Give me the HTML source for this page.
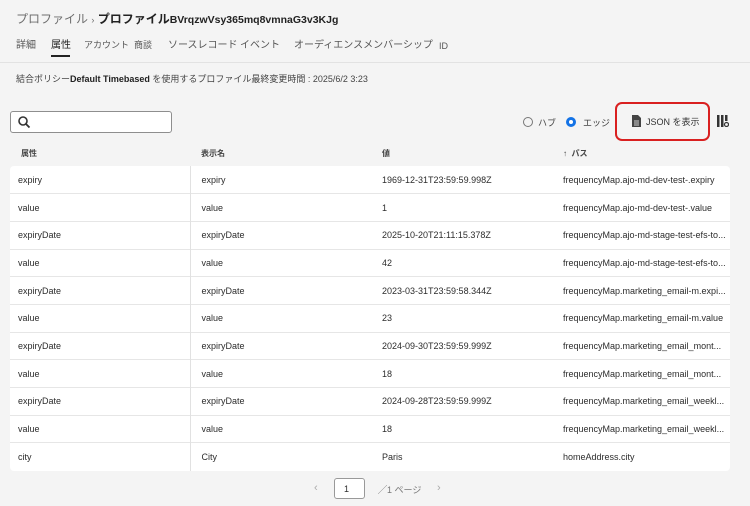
<!DOCTYPE html>
<html><head><meta charset="utf-8"><style>
*{margin:0;padding:0;box-sizing:border-box}
body{width:750px;height:506px;background:#f4f4f4;font-family:"Liberation Sans","Noto Sans CJK JP",sans-serif;color:#2c2c2c;position:relative;overflow:hidden;font-size:9px}
.a{position:absolute;white-space:nowrap}
.tab{position:absolute;top:39px;font-size:10px;line-height:13px;color:#555}
table{position:absolute;left:10px;top:166px;width:720px;border-collapse:collapse;background:#fff;border-radius:4px;font-size:9px}
td{height:27.7px;border-top:1px solid #e6e6e6;padding:0 0 0 8px;color:#2c2c2c}
tr:first-child td{border-top:none}
td:first-child{border-right:1px solid #e1e1e1;width:180px}
td:nth-child(2){width:180px;padding-left:11px}
td:nth-child(3){width:185px;padding-left:12px}
td:nth-child(4){padding-left:8px}
</style></head><body>
<div class="a" style="left:16px;top:10px;font-size:12px;color:#6e6e6e">プロファイル <span style="font-size:9px">›</span> <b style="color:#222">プロファイル</b><b style="color:#222;font-size:10.5px">BVrqzwVsy365mq8vmnaG3v3KJg</b></div>
<div class="tab" style="left:16px">詳細</div>
<div class="tab" style="left:51px;color:#222">属性</div>
<div class="a" style="left:51px;top:55px;width:19px;height:2px;background:#222"></div>
<div class="tab" style="left:84px;font-size:9px">アカウント</div>
<div class="tab" style="left:134px;font-size:9px">商談</div>
<div class="tab" style="left:168px">ソースレコード</div>
<div class="tab" style="left:240px">イベント</div>
<div class="tab" style="left:294px">オーディエンスメンバーシップ</div>
<div class="tab" style="left:439px;top:40px;font-size:9px">ID</div>
<div class="a" style="left:0;top:62px;width:750px;height:1px;background:#e2e2e2"></div>
<div class="a" style="left:16px;top:72px;font-size:9px;color:#444">結合ポリシー<b style="color:#222">Default Timebased</b> を使用するプロファイル最終変更時間 : 2025/6/2 3:23</div>
<div class="a" style="left:10px;top:111px;width:162px;height:22px;border:1px solid #8e8e8e;border-radius:3px;background:#fff"></div>
<svg class="a" style="left:17px;top:115px" width="14" height="14" viewBox="0 0 14 14"><circle cx="6" cy="6" r="4" fill="none" stroke="#333" stroke-width="1.6"/><path d="M9 9l3.5 3.5" stroke="#333" stroke-width="1.8"/></svg>
<div class="a" style="left:523px;top:117px;width:10px;height:10px;border:1px solid #777;border-radius:50%"></div>
<div class="a" style="left:538px;top:116px;font-size:9px;color:#444">ハブ</div>
<div class="a" style="left:566px;top:117px;width:10px;height:10px;border:3px solid #1473e6;border-radius:50%;background:#fff"></div>
<div class="a" style="left:583px;top:116px;font-size:9px;color:#444">エッジ</div>
<div class="a" style="left:615px;top:102px;width:95px;height:39px;border:2px solid #d92020;border-radius:7px"></div>
<svg class="a" style="left:632px;top:115px" width="9" height="12" viewBox="0 0 9 12"><path d="M0 0h6l3 3v9H0z" fill="#444"/><path d="M2 6h5M2 8h5M2 10h5" stroke="#fff" stroke-width=".8"/></svg>
<div class="a" style="left:646px;top:115px;font-size:9px;color:#333">JSON を表示</div>
<svg class="a" style="left:717px;top:115px" width="12" height="12" viewBox="0 0 12 12"><rect x="0" y="0" width="2.5" height="12" fill="#333"/><rect x="4" y="0" width="2.5" height="12" fill="#333"/><rect x="8" y="0" width="2.5" height="6" fill="#333"/><circle cx="9.5" cy="9.5" r="2" fill="none" stroke="#333" stroke-width="1.2"/></svg>
<div class="a" style="left:21px;top:148px;font-size:8px;font-weight:bold;color:#444">属性</div>
<div class="a" style="left:201px;top:148px;font-size:8px;font-weight:bold;color:#444">表示名</div>
<div class="a" style="left:382px;top:148px;font-size:8px;font-weight:bold;color:#444">値</div>
<div class="a" style="left:563px;top:148px;font-size:8px;font-weight:bold;color:#444">↑ &nbsp;パス</div>
<table>
<tr><td>expiry</td><td>expiry</td><td>1969-12-31T23:59:59.998Z</td><td>frequencyMap.ajo-md-dev-test-.expiry</td></tr>
<tr><td>value</td><td>value</td><td>1</td><td>frequencyMap.ajo-md-dev-test-.value</td></tr>
<tr><td>expiryDate</td><td>expiryDate</td><td>2025-10-20T21:11:15.378Z</td><td>frequencyMap.ajo-md-stage-test-efs-to...</td></tr>
<tr><td>value</td><td>value</td><td>42</td><td>frequencyMap.ajo-md-stage-test-efs-to...</td></tr>
<tr><td>expiryDate</td><td>expiryDate</td><td>2023-03-31T23:59:58.344Z</td><td>frequencyMap.marketing_email-m.expi...</td></tr>
<tr><td>value</td><td>value</td><td>23</td><td>frequencyMap.marketing_email-m.value</td></tr>
<tr><td>expiryDate</td><td>expiryDate</td><td>2024-09-30T23:59:59.999Z</td><td>frequencyMap.marketing_email_mont...</td></tr>
<tr><td>value</td><td>value</td><td>18</td><td>frequencyMap.marketing_email_mont...</td></tr>
<tr><td>expiryDate</td><td>expiryDate</td><td>2024-09-28T23:59:59.999Z</td><td>frequencyMap.marketing_email_weekl...</td></tr>
<tr><td>value</td><td>value</td><td>18</td><td>frequencyMap.marketing_email_weekl...</td></tr>
<tr><td>city</td><td>City</td><td>Paris</td><td>homeAddress.city</td></tr>
</table>
<div class="a" style="left:314px;top:482px;font-size:11px;color:#aaa">‹</div>
<div class="a" style="left:334px;top:478px;width:31px;height:21px;border:1px solid #999;border-radius:3px;background:#fff;font-size:9px;padding:5px 0 0 9px">1</div>
<div class="a" style="left:378px;top:483px;font-size:9px;color:#777">╱1 ページ</div>
<div class="a" style="left:437px;top:482px;font-size:11px;color:#aaa">›</div>
</body></html>
